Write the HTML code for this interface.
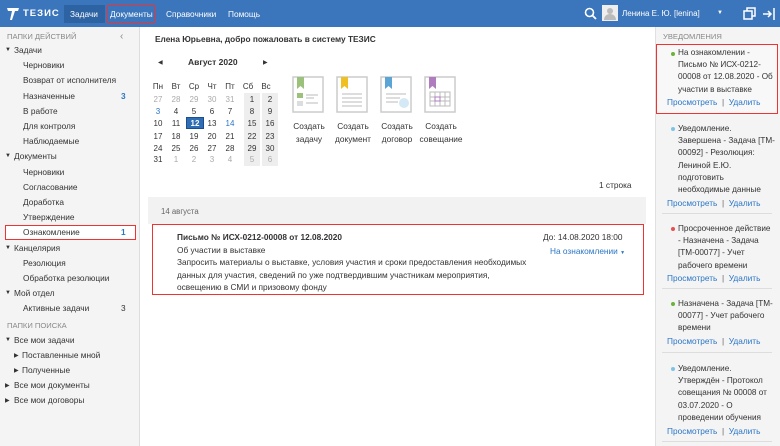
<!DOCTYPE html>
<html><head><meta charset="utf-8"><style>
*{margin:0;padding:0;box-sizing:border-box}
body{width:780px;height:446px;overflow:hidden;font-family:"Liberation Sans",sans-serif;font-size:8.3px;color:#333;background:#fff;position:relative}
.a{position:absolute;white-space:nowrap}
#hdr{position:absolute;left:0;top:0;width:780px;height:27px;background:#3b75bb}
#side{position:absolute;left:0;top:27px;width:140px;height:419px;background:#f4f4f4;border-right:1px solid #ddd}
#right{position:absolute;left:655px;top:27px;width:125px;height:419px;background:#f4f4f4;border-left:1px solid #e0e0e0}
.cap{color:#888;font-size:7.6px}
.tri{font-size:6px;color:#333}
.blue{color:#2a76c6}
.cal{position:absolute;width:18px;text-align:center;font-size:8px}
.g{color:#aaa}
.lk{color:#2a76c6}
.sep{position:absolute;left:662px;width:110px;height:1px;background:#ddd}
.dot{position:absolute;width:4px;height:4px;border-radius:50%}
.nt{font-size:8.2px;line-height:12.2px}
</style></head><body>
<div id="hdr"></div>
<svg class="a" style="left:6px;top:6px" width="14" height="15" viewBox="0 0 14 15"><path d="M1 2h12l-1 3H9L6 14H4L6 5H2z" fill="#fff"/></svg>
<div class="a" style="left:23px;top:8px;color:#fff;font-weight:bold;font-size:9.5px;letter-spacing:1px">ТЕЗИС</div>
<div class="a" style="left:64px;top:5px;width:41px;height:18px;background:#2e63a3"></div>
<div class="a" style="left:70px;top:9px;color:#fff">Задачи</div>
<div class="a" style="left:107px;top:5px;width:48px;height:18px;border:1px solid #e33"></div>
<div class="a" style="left:110px;top:9px;color:#fff">Документы</div>
<div class="a" style="left:166px;top:9px;color:#fff">Справочники</div>
<div class="a" style="left:228px;top:9px;color:#fff">Помощь</div>
<svg class="a" style="left:584px;top:7px" width="13" height="13" viewBox="0 0 13 13"><circle cx="5.5" cy="5.5" r="4" fill="none" stroke="#fff" stroke-width="1.6"/><path d="M8.5 8.5l3.5 3.5" stroke="#fff" stroke-width="1.8"/></svg>
<div class="a" style="left:602px;top:5px;width:16px;height:16px;background:#eee"></div>
<svg class="a" style="left:603px;top:6px" width="14" height="14" viewBox="0 0 14 14"><circle cx="7" cy="5" r="3" fill="#bbb"/><path d="M1 14c0-4 3-6 6-6s6 2 6 6z" fill="#bbb"/></svg>
<div class="a" style="left:622px;top:9px;color:#fff;font-size:8px">Ленина Е. Ю. [lenina]</div>
<div class="a" style="left:717px;top:10px;color:#fff;font-size:6px">▼</div>
<svg class="a" style="left:743px;top:7px" width="34" height="14" viewBox="0 0 34 14"><rect x="1" y="4" width="8" height="8" fill="none" stroke="#fff" stroke-width="1.5"/><path d="M4 4V1h8v8H9" fill="none" stroke="#fff" stroke-width="1.5"/><path d="M20 7h8M25 4l3 3-3 3M31 1v12" fill="none" stroke="#fff" stroke-width="1.5"/></svg>

<div id="side"></div>
<div class="a cap" style="left:7px;top:32px">ПАПКИ ДЕЙСТВИЙ</div>
<div class="a" style="left:120px;top:31px;color:#888;font-size:10px">‹</div>
<div class="a tri" style="left:5px;top:47px">▼</div><div class="a" style="left:14px;top:45px">Задачи</div>
<div class="a" style="left:23px;top:60px">Черновики</div>
<div class="a" style="left:23px;top:75px">Возврат от исполнителя</div>
<div class="a" style="left:23px;top:91px">Назначенные</div><div class="a blue" style="left:121px;top:91px;font-weight:bold">3</div>
<div class="a" style="left:23px;top:106px">В работе</div>
<div class="a" style="left:23px;top:121px">Для контроля</div>
<div class="a" style="left:23px;top:136px">Наблюдаемые</div>
<div class="a tri" style="left:5px;top:153px">▼</div><div class="a" style="left:14px;top:151px">Документы</div>
<div class="a" style="left:23px;top:167px">Черновики</div>
<div class="a" style="left:23px;top:182px">Согласование</div>
<div class="a" style="left:23px;top:197px">Доработка</div>
<div class="a" style="left:23px;top:212px">Утверждение</div>
<div class="a" style="left:5px;top:225px;width:131px;height:15px;border:1px solid #e33;background:#fff"></div>
<div class="a" style="left:23px;top:227px">Ознакомление</div><div class="a blue" style="left:121px;top:227px;font-weight:bold">1</div>
<div class="a tri" style="left:5px;top:245px">▼</div><div class="a" style="left:14px;top:243px">Канцелярия</div>
<div class="a" style="left:23px;top:258px">Резолюция</div>
<div class="a" style="left:23px;top:273px">Обработка резолюции</div>
<div class="a tri" style="left:5px;top:290px">▼</div><div class="a" style="left:14px;top:288px">Мой отдел</div>
<div class="a" style="left:23px;top:303px">Активные задачи</div><div class="a" style="left:121px;top:303px">3</div>
<div class="a cap" style="left:7px;top:321px">ПАПКИ ПОИСКА</div>
<div class="a tri" style="left:5px;top:337px">▼</div><div class="a" style="left:14px;top:335px">Все мои задачи</div>
<div class="a tri" style="left:14px;top:352px">▶</div><div class="a" style="left:22px;top:350px">Поставленные мной</div>
<div class="a tri" style="left:14px;top:367px">▶</div><div class="a" style="left:22px;top:365px">Полученные</div>
<div class="a tri" style="left:5px;top:382px">▶</div><div class="a" style="left:14px;top:380px">Все мои документы</div>
<div class="a tri" style="left:5px;top:397px">▶</div><div class="a" style="left:14px;top:395px">Все мои договоры</div>

<div class="a" style="left:155px;top:34px;font-weight:bold;font-size:8.3px">Елена Юрьевна, добро пожаловать в систему ТЕЗИС</div>
<div class="a tri" style="left:158px;top:59px">◀</div>
<div class="a" style="left:188px;top:57px;font-weight:bold;font-size:8.5px">Август 2020</div>
<div class="a tri" style="left:263px;top:59px">▶</div>
<div class="a" style="left:244px;top:93px;width:16px;height:73px;background:#eee"></div>
<div class="a" style="left:262px;top:93px;width:16px;height:73px;background:#eee"></div>
<div class="a" style="left:186px;top:117px;width:18px;height:12px;background:#2f6db5;border:1px solid #1a4e90"></div>
<div class="cal" style="left:149px;top:82px">Пн</div><div class="cal" style="left:167px;top:82px">Вт</div><div class="cal" style="left:185px;top:82px">Ср</div><div class="cal" style="left:203px;top:82px">Чт</div><div class="cal" style="left:221px;top:82px">Пт</div><div class="cal" style="left:239px;top:82px">Сб</div><div class="cal" style="left:257px;top:82px">Вс</div>
<div class="cal g" style="left:149px;top:95px">27</div><div class="cal g" style="left:167px;top:95px">28</div><div class="cal g" style="left:185px;top:95px">29</div><div class="cal g" style="left:203px;top:95px">30</div><div class="cal g" style="left:221px;top:95px">31</div><div class="cal" style="left:243px;top:95px">1</div><div class="cal" style="left:261px;top:95px">2</div>
<div class="cal blue" style="left:149px;top:107px">3</div><div class="cal" style="left:167px;top:107px">4</div><div class="cal" style="left:185px;top:107px">5</div><div class="cal" style="left:203px;top:107px">6</div><div class="cal" style="left:221px;top:107px">7</div><div class="cal" style="left:243px;top:107px">8</div><div class="cal" style="left:261px;top:107px">9</div>
<div class="cal" style="left:149px;top:119px">10</div><div class="cal" style="left:167px;top:119px">11</div><div class="cal" style="left:186px;top:119px;color:#fff;font-weight:bold">12</div><div class="cal" style="left:203px;top:119px">13</div><div class="cal blue" style="left:221px;top:119px">14</div><div class="cal" style="left:243px;top:119px">15</div><div class="cal" style="left:261px;top:119px">16</div>
<div class="cal" style="left:149px;top:132px">17</div><div class="cal" style="left:167px;top:132px">18</div><div class="cal" style="left:185px;top:132px">19</div><div class="cal" style="left:203px;top:132px">20</div><div class="cal" style="left:221px;top:132px">21</div><div class="cal" style="left:243px;top:132px">22</div><div class="cal" style="left:261px;top:132px">23</div>
<div class="cal" style="left:149px;top:144px">24</div><div class="cal" style="left:167px;top:144px">25</div><div class="cal" style="left:185px;top:144px">26</div><div class="cal" style="left:203px;top:144px">27</div><div class="cal" style="left:221px;top:144px">28</div><div class="cal" style="left:243px;top:144px">29</div><div class="cal" style="left:261px;top:144px">30</div>
<div class="cal" style="left:149px;top:155px">31</div><div class="cal g" style="left:167px;top:155px">1</div><div class="cal g" style="left:185px;top:155px">2</div><div class="cal g" style="left:203px;top:155px">3</div><div class="cal g" style="left:221px;top:155px">4</div><div class="cal g" style="left:243px;top:155px">5</div><div class="cal g" style="left:261px;top:155px">6</div>

<svg class="a" style="left:292px;top:76px" width="32" height="37" viewBox="0 0 32 37"><rect x="1" y="1" width="30" height="35" fill="#fff" stroke="#ccc" stroke-width="1.5"/><path d="M5 1h7v12l-3.5-3-3.5 3z" fill="#9bc17a"/><rect x="5" y="17" width="6" height="5" fill="#9bc17a"/><rect x="5" y="25" width="6" height="5" fill="#ddd"/><path d="M14 19h12M14 22h8M14 27h12" stroke="#bbb"/></svg>
<svg class="a" style="left:336px;top:76px" width="32" height="37" viewBox="0 0 32 37"><rect x="1" y="1" width="30" height="35" fill="#fff" stroke="#ccc" stroke-width="1.5"/><path d="M5 1h7v12l-3.5-3-3.5 3z" fill="#f0c020"/><path d="M6 18h20M6 22h20M6 26h20M6 30h20" stroke="#bbb"/></svg>
<svg class="a" style="left:380px;top:76px" width="32" height="37" viewBox="0 0 32 37"><rect x="1" y="1" width="30" height="35" fill="#fff" stroke="#ccc" stroke-width="1.5"/><path d="M5 1h7v12l-3.5-3-3.5 3z" fill="#5aa5d5"/><path d="M6 18h20M6 22h14M6 26h12" stroke="#bbb"/><circle cx="24" cy="27" r="5" fill="#d4e8f5"/></svg>
<svg class="a" style="left:424px;top:76px" width="32" height="37" viewBox="0 0 32 37"><rect x="1" y="1" width="30" height="35" fill="#fff" stroke="#ccc" stroke-width="1.5"/><path d="M5 1h7v12l-3.5-3-3.5 3z" fill="#b07cc0"/><path d="M6 16h20v14H6zM6 21h20M6 25h20M11 16v14M16 16v14M21 16v14" fill="none" stroke="#bbb"/><rect x="11" y="21" width="5" height="4" fill="none" stroke="#b07cc0"/></svg>
<div class="a" style="left:289px;top:120px;text-align:center;width:40px;line-height:13px;white-space:normal">Создать задачу</div>
<div class="a" style="left:332px;top:120px;text-align:center;width:42px;line-height:13px;white-space:normal">Создать документ</div>
<div class="a" style="left:376px;top:120px;text-align:center;width:42px;line-height:13px;white-space:normal">Создать договор</div>
<div class="a" style="left:416px;top:120px;text-align:center;width:50px;line-height:13px;white-space:normal">Создать совещание</div>

<div class="a" style="left:599px;top:180px">1 строка</div>
<div class="a" style="left:148px;top:197px;width:498px;height:27px;background:#f2f2f2"></div>
<div class="a" style="left:161px;top:207px;color:#666;font-size:7.8px">14 августа</div>
<div class="a" style="left:152px;top:224px;width:492px;height:71px;border:1.5px solid #e33;background:#fff"></div>
<div class="a" style="left:177px;top:232px;font-weight:bold">Письмо № ИСХ-0212-00008 от 12.08.2020</div>
<div class="a" style="left:177px;top:244px;line-height:12.3px">Об участии в выставке<br>Запросить материалы о выставке, условия участия и сроки предоставления необходимых<br>данных для участия, сведений по уже подтвердившим участникам мероприятия,<br>освещению в СМИ и призовому фонду</div>
<div class="a" style="left:543px;top:232px">До: 14.08.2020 18:00</div>
<div class="a lk" style="left:550px;top:246px">На ознакомлении <span style="font-size:5px">▼</span></div>

<div id="right"></div>
<div class="a cap" style="left:663px;top:32px">УВЕДОМЛЕНИЯ</div>
<div class="a" style="left:656px;top:44px;width:122px;height:70px;border:1.5px solid #e33;background:#f8f8f8"></div>
<div class="dot" style="left:671px;top:52px;background:#6bb33c"></div>
<div class="a nt" style="left:678px;top:47px">На ознакомлении -<br>Письмо № ИСХ-0212-<br>00008 от 12.08.2020 - Об<br>участии в выставке</div>
<div class="a lk" style="left:667px;top:97px">Просмотреть&nbsp;&nbsp;<span style="color:#666">|</span>&nbsp;&nbsp;Удалить</div>

<div class="dot" style="left:671px;top:127px;background:#7ec3e6"></div>
<div class="a nt" style="left:678px;top:123px">Уведомление.<br>Завершена - Задача [ТМ-<br>00092] - Резолюция:<br>Лениной Е.Ю.<br>подготовить<br>необходимые данные</div>
<div class="a lk" style="left:667px;top:198px">Просмотреть&nbsp;&nbsp;<span style="color:#666">|</span>&nbsp;&nbsp;Удалить</div>
<div class="sep" style="top:213px"></div>

<div class="dot" style="left:671px;top:227px;background:#e85050"></div>
<div class="a nt" style="left:678px;top:223px">Просроченное действие<br>- Назначена - Задача<br>[ТМ-00077] - Учет<br>рабочего времени</div>
<div class="a lk" style="left:667px;top:273px">Просмотреть&nbsp;&nbsp;<span style="color:#666">|</span>&nbsp;&nbsp;Удалить</div>
<div class="sep" style="top:288px"></div>

<div class="dot" style="left:671px;top:302px;background:#6bb33c"></div>
<div class="a nt" style="left:678px;top:298px">Назначена - Задача [ТМ-<br>00077] - Учет рабочего<br>времени</div>
<div class="a lk" style="left:667px;top:336px">Просмотреть&nbsp;&nbsp;<span style="color:#666">|</span>&nbsp;&nbsp;Удалить</div>
<div class="sep" style="top:352px"></div>

<div class="dot" style="left:671px;top:367px;background:#7ec3e6"></div>
<div class="a nt" style="left:678px;top:363px">Уведомление.<br>Утверждён - Протокол<br>совещания № 00008 от<br>03.07.2020 - О<br>проведении обучения</div>
<div class="a lk" style="left:667px;top:426px">Просмотреть&nbsp;&nbsp;<span style="color:#666">|</span>&nbsp;&nbsp;Удалить</div>
<div class="sep" style="top:441px"></div>
</body></html>
